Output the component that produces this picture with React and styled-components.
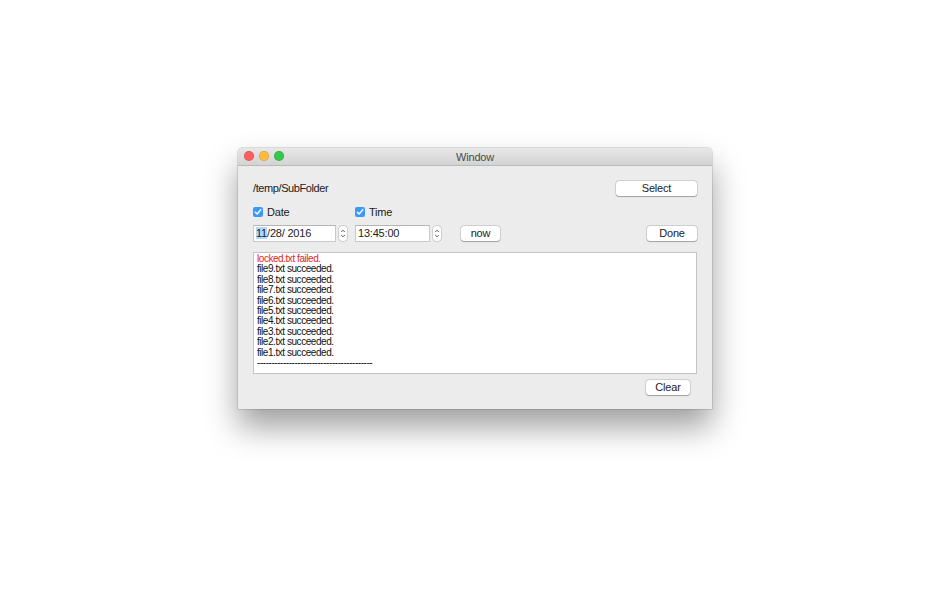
import React from 'react';
import styled, { createGlobalStyle } from 'styled-components';

const GlobalStyle = createGlobalStyle`
  html, body { margin: 0; padding: 0; background: #ffffff; }
  body { font-family: "Liberation Sans", Arial, sans-serif; }
`;

const Page = styled.div`
  width: 950px;
  height: 594px;
  display: flex;
  justify-content: center;
  padding-top: 148px;
  box-sizing: border-box;
`;

const Window = styled.div`
  width: 474px;
  height: 261px;
  background: #ececec;
  border-radius: 4px 4px 0 0;
  box-shadow: 0 0 0 0.5px rgba(0,0,0,0.22), 0 18px 32px rgba(0,0,0,0.38);
  display: flex;
  flex-direction: column;
  overflow: hidden;
`;

const TitleBar = styled.div`
  height: 17px;
  flex: none;
  position: relative;
  background: linear-gradient(#e8e8e8, #d3d3d3);
  border-bottom: 1px solid #b9b9b9;
  display: flex;
  align-items: center;
  justify-content: center;
  font-size: 11px;
  letter-spacing: -0.2px;
  color: #4a4a4a;
`;

const Lights = styled.div`
  position: absolute;
  left: 6px;
  top: 3px;
  display: flex;
  gap: 5px;
`;

const Light = styled.span`
  width: 10px;
  height: 10px;
  border-radius: 50%;
  background: ${p => p.color};
  box-shadow: inset 0 0 0 0.5px rgba(0,0,0,0.18);
`;

const Body = styled.div`
  padding: 14px 15px 0 15px;
  display: flex;
  flex-direction: column;
`;

const Row = styled.div`
  display: flex;
  align-items: center;
  height: ${p => p.h}px;
  margin-top: ${p => p.mt || 0}px;
`;

const PathText = styled.div`
  font-size: 11px;
  letter-spacing: -0.4px;
  color: #222;
  flex: 1;
`;

const Button = styled.button`
  width: ${p => p.w}px;
  height: 15px;
  padding: 0;
  margin-left: ${p => p.ml || 0}px;
  background: #ffffff;
  border: none;
  border-radius: 3px;
  box-shadow: 0 0 0 0.5px rgba(0,0,0,0.2), 0 0.5px 1px rgba(0,0,0,0.25);
  font-family: "Liberation Sans", Arial, sans-serif;
  font-size: 11px;
  letter-spacing: -0.2px;
  color: #222;
  line-height: 15px;
`;

const Check = styled.label`
  display: flex;
  align-items: center;
  gap: 4px;
  font-size: 11px;
  letter-spacing: -0.2px;
  color: #222;
  width: ${p => p.w}px;
`;

const Box = styled.span`
  width: 10px;
  height: 10px;
  border-radius: 2px;
  background: #3b99fc;
  display: flex;
  align-items: center;
  justify-content: center;
`;

const Field = styled.div`
  width: ${p => p.w}px;
  height: 17px;
  box-sizing: border-box;
  background: #fff;
  border: 1px solid #c9c9c9;
  border-top-color: #b5b5b5;
  font-size: 11px;
  letter-spacing: -0.2px;
  color: #222;
  padding-left: 2px;
  display: flex;
  align-items: center;
`;

const Sel = styled.span`
  background: #b3d7ff;
`;

const Stepper = styled.div`
  width: 8px;
  height: 15px;
  margin-left: ${p => p.ml}px;
  margin-right: ${p => p.mr || 0}px;
  background: #fff;
  border-radius: 3px;
  box-shadow: 0 0 0 0.5px rgba(0,0,0,0.25);
  display: flex;
  align-items: center;
  justify-content: center;
`;

const Spacer = styled.div`
  flex: 1;
`;

const Log = styled.div`
  margin-top: 10px;
  height: 122px;
  box-sizing: border-box;
  background: #fff;
  border: 1px solid #c4c4c4;
  padding: 1px 0 0 3px;
  font-size: 10px;
  letter-spacing: -0.45px;
  line-height: 10.4px;
  color: #111;
`;

const Line = styled.div`
  color: ${p => (p.error ? '#e5261b' : '#111')};
  white-space: nowrap;
`;

const Footer = styled.div`
  display: flex;
  justify-content: flex-end;
  margin-top: 6px;
  padding-right: 7px;
`;

const Tick = () => (
  <svg width="8" height="8" viewBox="0 0 8 8">
    <path d="M1.3 4.2 L3.2 6 L6.8 1.6" fill="none" stroke="#fff" strokeWidth="1.4" strokeLinecap="round" strokeLinejoin="round" />
  </svg>
);

const Arrows = () => (
  <svg width="6" height="11" viewBox="0 0 6 11">
    <path d="M1.2 4 L3 2.2 L4.8 4 M1.2 7 L3 8.8 L4.8 7" fill="none" stroke="#444" strokeWidth="0.9" />
  </svg>
);

const lines = [9, 8, 7, 6, 5, 4, 3, 2, 1].map(n => `file${n}.txt succeeded.`);

export default function App() {
  return (
    <>
      <GlobalStyle />
      <Page>
        <Window>
          <TitleBar>
            <Lights>
              <Light color="#fc605b" />
              <Light color="#fdbc40" />
              <Light color="#34c84a" />
            </Lights>
            Window
          </TitleBar>
          <Body>
            <Row h={16}>
              <PathText>/temp/SubFolder</PathText>
              <Button w={81}>Select</Button>
            </Row>
            <Row h={12} mt={10}>
              <Check w={102}><Box><Tick /></Box>Date</Check>
              <Check w={80}><Box><Tick /></Box>Time</Check>
            </Row>
            <Row h={18} mt={6}>
              <Field w={83}><Sel>11</Sel>/28/ 2016</Field>
              <Stepper ml={3} mr={8}><Arrows /></Stepper>
              <Field w={75}>13:45:00</Field>
              <Stepper ml={3}><Arrows /></Stepper>
              <Button w={39} ml={20}>now</Button>
              <Spacer />
              <Button w={50}>Done</Button>
            </Row>
            <Log>
              <Line error>locked.txt failed.</Line>
              {lines.map(l => <Line key={l}>{l}</Line>)}
              <Line>----------------------------------------</Line>
            </Log>
            <Footer>
              <Button w={44}>Clear</Button>
            </Footer>
          </Body>
        </Window>
      </Page>
    </>
  );
}
